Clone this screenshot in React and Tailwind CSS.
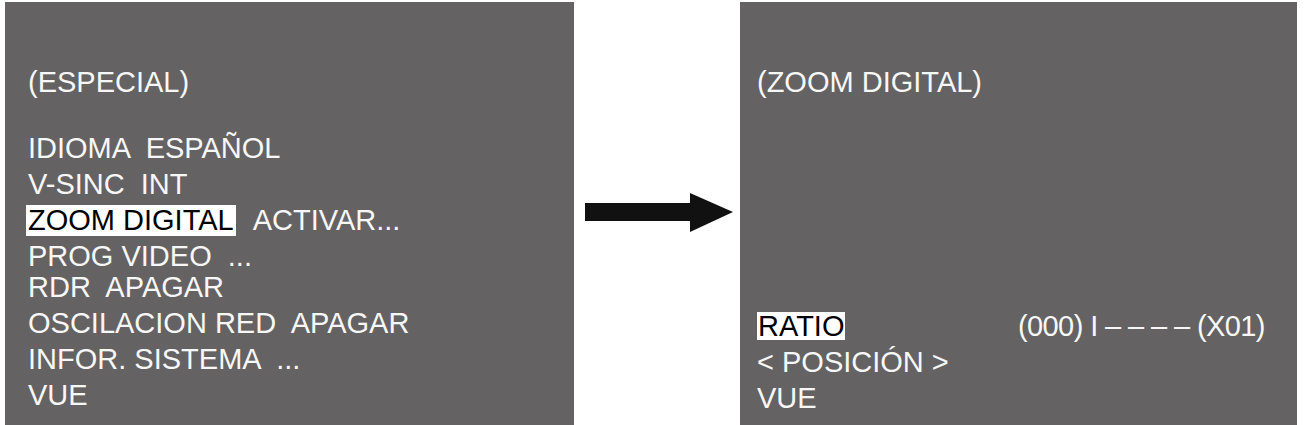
import React from "react";

const font = { fontFamily: '"Liberation Sans", Arial, sans-serif' };

export default function App() {
  return (
    <div className="w-[1309px] h-[425px] bg-white overflow-hidden flex pt-[2px] pl-[5px]" style={font}>
      <div className="w-[569px] h-[423px] bg-[#646263] pl-[23px] pt-[62px] text-[29px] leading-[36px] text-[#f7f7f7] flex flex-col items-start">
        <div className="mb-[30px]">(ESPECIAL)</div>
        <div className="whitespace-pre">IDIOMA  ESPAÑOL</div>
        <div className="whitespace-pre">V-SINC  INT</div>
        <div className="whitespace-pre flex items-center">
          <span className="bg-white text-black px-[2px] -ml-[2px] leading-[31px]">ZOOM DIGITAL</span>
          <span className="ml-[17px]">ACTIVAR...</span>
        </div>
        <div className="whitespace-pre">PROG VIDEO  ...</div>
        <div className="whitespace-pre -mt-[5px]">RDR  APAGAR</div>
        <div className="whitespace-pre">OSCILACION RED  APAGAR</div>
        <div className="whitespace-pre">INFOR. SISTEMA  ...</div>
        <div>VUE</div>
      </div>
      <div className="w-[166px] h-[423px] flex items-start">
        <svg width="148" height="40" viewBox="0 0 148 40" className="ml-[11px] mt-[191px]">
          <rect x="0" y="10" width="108" height="18" fill="#111" />
          <polygon points="105,0 148,19 105,39" fill="#111" />
        </svg>
      </div>
      <div className="w-[557px] h-[423px] bg-[#646263] pl-[17px] pt-[62px] pb-[9px] text-[29px] leading-[36px] text-[#f7f7f7] flex flex-col justify-between">
        <div>(ZOOM DIGITAL)</div>
        <div className="flex flex-col items-start">
          <div className="flex items-center w-full">
            <span className="bg-white text-black px-[1px] leading-[28px] w-[88px]">RATIO</span>
            <span className="ml-[173px] whitespace-pre tracking-[-0.6px]">(000) I – – – – (X01)</span>
          </div>
          <div>&lt; POSICIÓN &gt;</div>
          <div>VUE</div>
        </div>
      </div>
    </div>
  );
}
